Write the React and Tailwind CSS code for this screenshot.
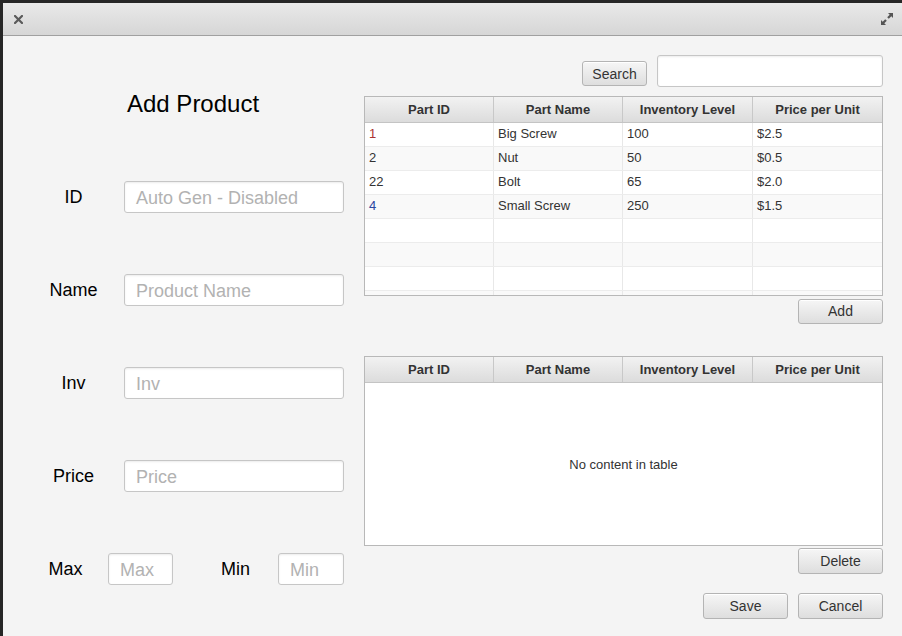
import React from "react";

const font = { fontFamily: '"Liberation Sans", Arial, sans-serif' };

function Btn({ children, className = "" }) {
  return (
    <div
      className={
        "flex items-center justify-center rounded-[3px] border border-[#b4b4b4] bg-gradient-to-b from-[#f6f6f6] to-[#dedede] text-[14px] text-[#333] shadow-[inset_0_1px_0_#fff] " +
        className
      }
    >
      {children}
    </div>
  );
}

function Field({ placeholder, className = "" }) {
  return (
    <div
      className={
        "flex h-[32px] items-center rounded-[3px] border border-[#c6c6c6] bg-white pl-[11px] pt-[2px] text-[18px] text-[#b2b2b2] shadow-[inset_0_1px_2px_rgba(0,0,0,0.08)] " +
        className
      }
    >
      {placeholder}
    </div>
  );
}

const cols = "grid grid-cols-[129px_129px_130px_1fr]";

function Header() {
  return (
    <div className={cols + " h-[26px] border-b border-[#c4c4c4] bg-gradient-to-b from-[#f2f2f2] to-[#dcdcdc]"}>
      {["Part ID", "Part Name", "Inventory Level", "Price per Unit"].map((h, i) => (
        <div
          key={h}
          className={
            "flex items-center justify-center pt-[1px] text-[13px] font-bold text-[#333] " +
            (i < 3 ? "border-r border-[#c8c8c8]" : "")
          }
        >
          {h}
        </div>
      ))}
    </div>
  );
}

const rows = [
  ["1", "Big Screw", "100", "$2.5", "text-[#a33]"],
  ["2", "Nut", "50", "$0.5", "text-[#333]"],
  ["22", "Bolt", "65", "$2.0", "text-[#333]"],
  ["4", "Small Screw", "250", "$1.5", "text-[#2b46a0]"],
  ["", "", "", "", ""],
  ["", "", "", "", ""],
  ["", "", "", "", ""],
  ["", "", "", "", ""],
];

export default function App() {
  return (
    <div className="h-[636px] w-[902px] overflow-hidden bg-[#262626] pl-[3px] pt-[3px]" style={font}>
      <div className="flex h-full flex-col bg-[#f4f4f4]">
        {/* title bar */}
        <div className="flex h-[33px] shrink-0 items-center justify-between border-b border-[#a0a0a0] bg-gradient-to-b from-[#e9e9e9] to-[#d6d6d6] pl-[11px] pr-[9px]">
          <svg width="9" height="9" viewBox="0 0 9 9">
            <path d="M1 1 L8 8 M8 1 L1 8" stroke="#5a5a5a" strokeWidth="2.2" strokeLinecap="square" />
          </svg>
          <svg width="12" height="12" viewBox="0 0 12 12" fill="#555">
            <path d="M7 0 H12 V5 L10.3 3.3 L7.8 5.8 L6.2 4.2 L8.7 1.7 Z" />
            <path d="M0 7 V12 H5 L3.3 10.3 L5.8 7.8 L4.2 6.2 L1.7 8.7 Z" />
          </svg>
        </div>

        <div className="flex flex-1">
          {/* left column */}
          <div className="flex w-[361px] shrink-0 flex-col pl-[27px]">
            <div className="mt-[54px] flex h-[28px] items-center pl-[97px] text-[24px] text-black">Add Product</div>
            <div className="mt-[63px] flex flex-col gap-[61px]">
              {[
                ["ID", "Auto Gen - Disabled"],
                ["Name", "Product Name"],
                ["Inv", "Inv"],
                ["Price", "Price"],
              ].map(([l, p]) => (
                <div key={l} className="flex h-[32px] items-center">
                  <div className="w-[87px] pt-[1px] text-center text-[18px] text-black">{l}</div>
                  <Field placeholder={p} className="ml-[7px] w-[220px]" />
                </div>
              ))}
              <div className="flex h-[32px] items-center">
                <div className="w-[71px] pt-[1px] text-center text-[18px] text-black">Max</div>
                <Field placeholder="Max" className="ml-[7px] w-[65px]" />
                <div className="w-[105px] pl-[20px] pt-[1px] text-center text-[18px] text-black">Min</div>
                <Field placeholder="Min" className="w-[66px]" />
              </div>
            </div>
          </div>

          {/* right column */}
          <div className="flex w-[519px] shrink-0 flex-col">
            <div className="mt-[19px] flex items-end justify-end gap-[10px]">
              <Btn className="mb-[1px] h-[25px] w-[65px] pt-[1px]">Search</Btn>
              <div className="h-[32px] w-[226px] rounded-[3px] border border-[#c6c6c6] bg-white shadow-[inset_0_1px_2px_rgba(0,0,0,0.08)]" />
            </div>

            <div className="mt-[9px] h-[200px] overflow-hidden border border-[#b8b8b8] bg-white">
              <Header />
              {rows.map((r, i) => (
                <div
                  key={i}
                  className={cols + " h-[24px] border-b border-[#ececec] text-[13px] text-[#333] " + (i % 2 ? "bg-[#f9f9f9]" : "bg-white")}
                >
                  {r.slice(0, 4).map((c, j) => (
                    <div
                      key={j}
                      className={
                        "flex items-center pb-[1px] pl-[4px] " +
                        (j < 3 ? "border-r border-[#e8e8e8] " : "") +
                        (j === 0 ? r[4] : "")
                      }
                    >
                      {c}
                    </div>
                  ))}
                </div>
              ))}
            </div>

            <div className="mt-[3px] flex justify-end">
              <Btn className="h-[25px] w-[85px]">Add</Btn>
            </div>

            <div className="mt-[32px] flex h-[190px] flex-col overflow-hidden border border-[#b8b8b8] bg-white">
              <Header />
              <div className="flex flex-1 items-center justify-center pt-[2px] text-[13px] text-[#333]">
                No content in table
              </div>
            </div>

            <div className="mt-[2px] flex justify-end">
              <Btn className="h-[26px] w-[85px]">Delete</Btn>
            </div>

            <div className="mt-[19px] flex justify-end gap-[10px]">
              <Btn className="h-[26px] w-[85px]">Save</Btn>
              <Btn className="h-[26px] w-[85px]">Cancel</Btn>
            </div>
          </div>
        </div>
      </div>
    </div>
  );
}
